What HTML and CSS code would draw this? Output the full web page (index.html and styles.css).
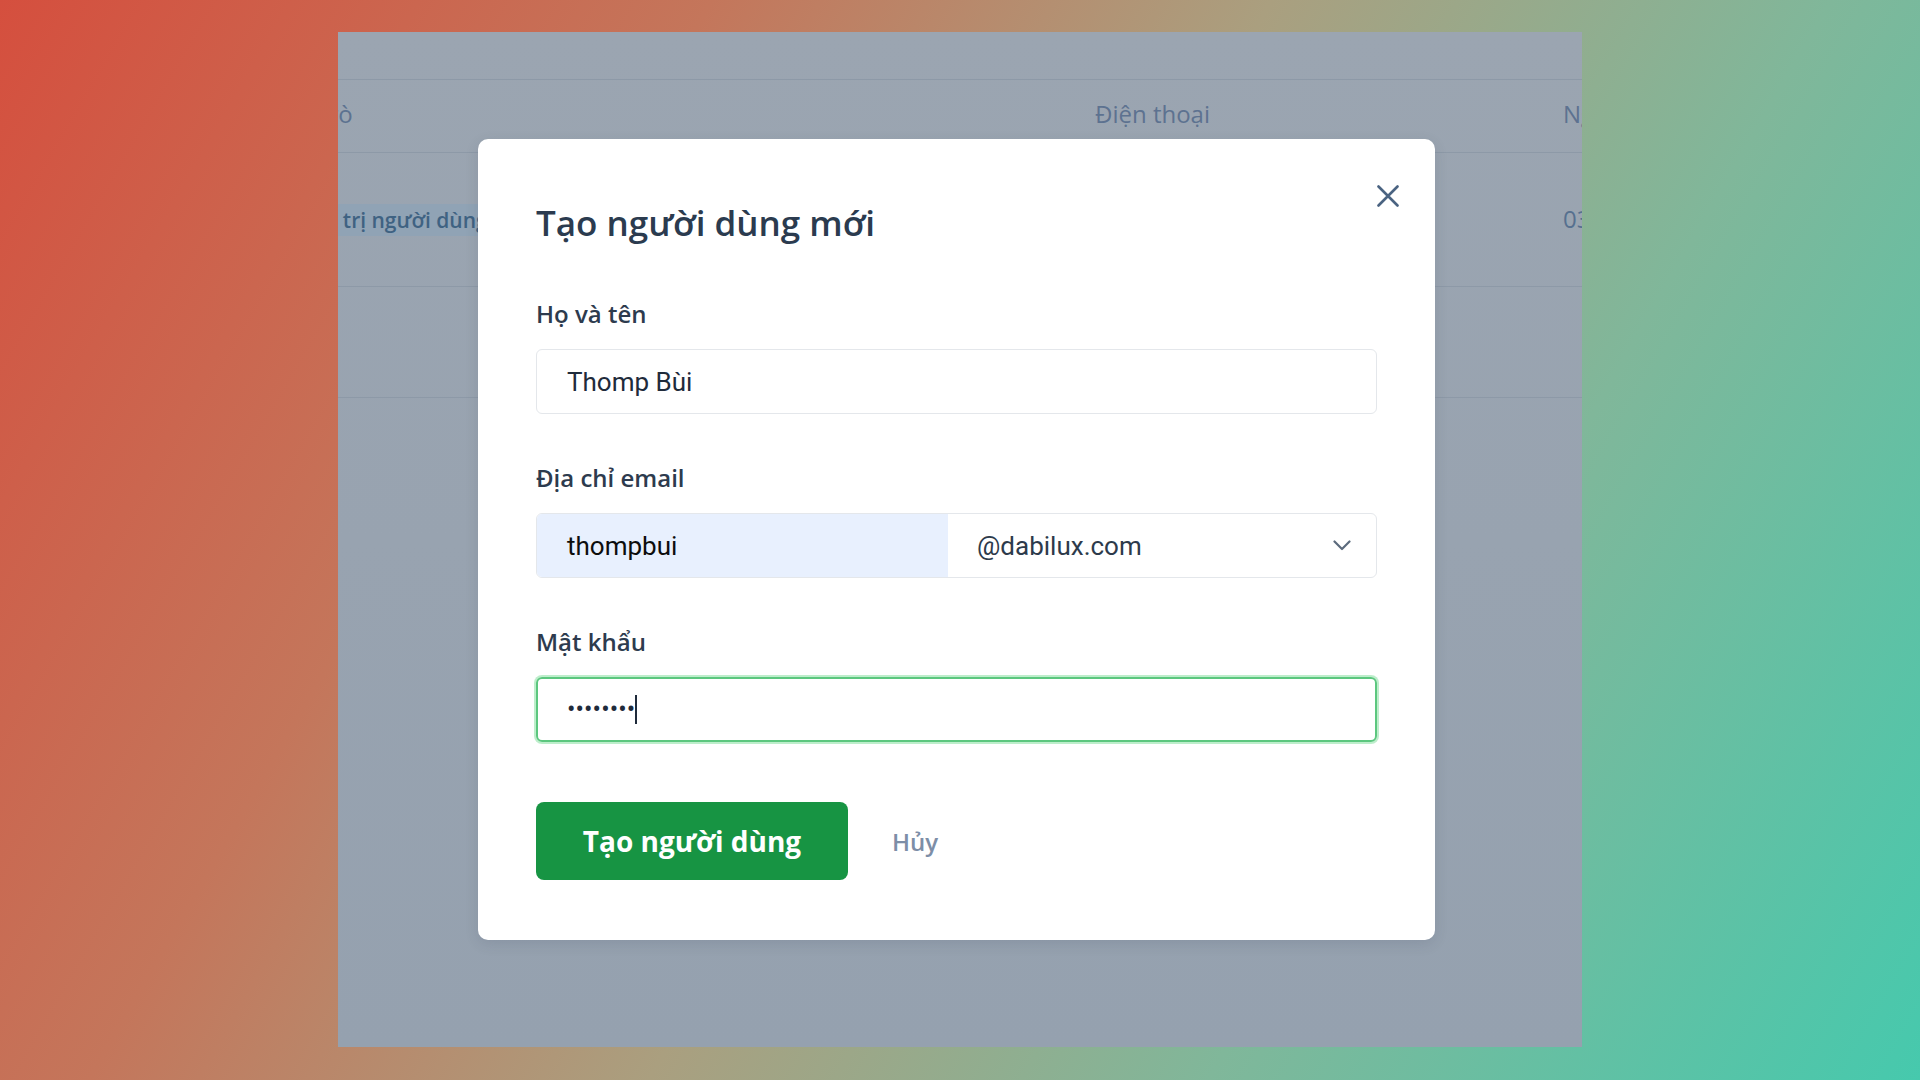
FILE: index.html
```html
<!DOCTYPE html>
<html lang="vi">
<head>
<meta charset="utf-8">
<title>Tạo người dùng mới</title>
<link rel="stylesheet" href="styles.css">
</head>
<body>
<div class="panel">
  <div class="table">
    <div class="toolbar"></div>
    <div class="trow thead">
      <div class="cell c1">Vai trò</div>
      <div class="cell c2">Điện thoại</div>
      <div class="cell c3">Ngày tạo</div>
    </div>
    <div class="trow row1">
      <div class="cell c1"><span class="chip">Quản trị người dùng</span></div>
      <div class="cell c2">0901 234 567</div>
      <div class="cell c3">03/12/2023</div>
    </div>
    <div class="trow row2"></div>
  </div>

  <div class="overlay">
    <div class="modal">
      <h1 class="modal-title">Tạo người dùng mới</h1>
      <button class="close" aria-label="Đóng">
        <svg width="22" height="22" viewBox="0 0 22 22"><path d="M1.5 1.5 L20.5 20.5 M20.5 1.5 L1.5 20.5" stroke="#4a6381" stroke-width="2.6" stroke-linecap="round" fill="none"/></svg>
      </button>

      <div class="field">
        <div class="label">Họ và tên</div>
        <div class="input">Thomp Bùi</div>
      </div>

      <div class="field">
        <div class="label">Địa chỉ email</div>
        <div class="email-group">
          <div class="email-user">thompbui</div>
          <div class="email-domain">
            <span>@dabilux.com</span>
            <svg width="18" height="11" viewBox="0 0 18 11"><path d="M1.5 1.5 L9 9 L16.5 1.5" stroke="#5c6b7d" stroke-width="2.2" stroke-linecap="round" stroke-linejoin="round" fill="none"/></svg>
          </div>
        </div>
      </div>

      <div class="field">
        <div class="label">Mật khẩu</div>
        <div class="input focused"><span class="dots">••••••••</span><span class="caret"></span></div>
      </div>

      <div class="actions">
        <button class="btn-primary">Tạo người dùng</button>
        <button class="btn-cancel">Hủy</button>
      </div>
    </div>
  </div>
</div>
</body>
</html>
```

FILE: styles.css
```css
* { box-sizing: border-box; }

html, body {
  margin: 0;
  width: 1920px;
  height: 1080px;
  overflow: hidden;
}

body {
  padding: 32px 338px 33px 338px;
  background: linear-gradient(120deg, #d54f3e 0%, #c4765b 28%, #aa9f7f 50%, #80b79a 72%, #46c9ad 100%);
  font-family: "Open Sans", "Noto Sans", sans-serif;
}

.panel {
  position: relative;
  height: 100%;
  overflow: hidden;
  background: linear-gradient(180deg, #9ba5b1 0%, #95a1af 100%);
}

/* background table (dimmed app) */
.table {
  margin-left: -66px;
  width: 1600px;
}

.toolbar {
  height: 48px;
  border-bottom: 1px solid #8d99a7;
}

.trow {
  display: grid;
  grid-template-columns: 823px 468px 300px;
  align-items: center;
  border-bottom: 1px solid #8d99a7;
  font-size: 24px;
  color: #5d7290;
}

.thead { height: 73px; padding-bottom: 6px; }
.row1 { height: 134px; padding-bottom: 2px; }
.row2 { height: 111px; }

.cell { white-space: nowrap; }
.thead .c1 { padding-left: 8px; }

.chip {
  display: inline-block;
  padding: 2px 10px 2px;
  background: #90a3b5;
  color: #3f6282;
  font-size: 21px;
  font-weight: 600;
  border-radius: 4px;
}

.row1 .c3 { color: #56708f; }

/* modal */
.overlay {
  position: absolute;
  inset: 0;
  display: flex;
  align-items: center;
  justify-content: flex-start;
  padding-left: 140px;
}

.modal {
  position: relative;
  width: 957px;
  background: #ffffff;
  border-radius: 10px;
  padding: 62px 58px 60px 58px;
  box-shadow: 0 4px 14px rgba(40, 50, 70, 0.12);
}

.modal-title {
  margin: 0;
  font-size: 35px;
  line-height: 44px;
  font-weight: 600;
  color: #2b3b4f;
}

.close {
  position: absolute;
  top: 46px;
  right: 36px;
  width: 22px;
  height: 22px;
  padding: 0;
  border: 0;
  background: none;
  display: flex;
}

.field { margin-top: 48px; }
.modal-title + .close + .field { margin-top: 53px; }

.label {
  font-size: 24px;
  line-height: 32px;
  font-weight: 600;
  color: #2d3b4e;
  margin-bottom: 19px;
}

.input {
  height: 65px;
  border: 1px solid #e4e7eb;
  border-radius: 6px;
  padding: 0 30px;
  display: flex;
  align-items: center;
  font-family: Roboto, "Noto Sans", sans-serif;
  font-size: 26px;
  color: #1f2b3b;
}

.input.focused {
  border: 2px solid #5cc77f;
  box-shadow: 0 0 0 2px rgba(134, 224, 160, 0.55);
  padding-left: 29px;
}

.dots {
  font-size: 25px;
  letter-spacing: 0.1px;
  color: #1f2b3b;
}

.caret {
  width: 2px;
  height: 29px;
  margin-left: 0;
  background: #1f2b3b;
}

.email-group {
  height: 65px;
  display: flex;
  border: 1px solid #e4e7eb;
  border-radius: 6px;
  font-family: Roboto, "Noto Sans", sans-serif;
  font-size: 26px;
}

.email-user {
  width: 411px;
  background: #e8f0fe;
  border-radius: 5px 0 0 5px;
  padding-left: 30px;
  display: flex;
  align-items: center;
  color: #0d0d0d;
}

.email-domain {
  flex: 1;
  display: flex;
  align-items: center;
  justify-content: space-between;
  padding: 0 25px 0 29px;
  color: #2d3a4b;
}

.actions {
  margin-top: 60px;
  display: flex;
  align-items: center;
}

.btn-primary {
  width: 312px;
  height: 78px;
  border: 0;
  border-radius: 8px;
  background: #179443;
  color: #ffffff;
  font-family: "Open Sans", "Noto Sans", sans-serif;
  font-size: 28px;
  font-weight: 700;
  padding: 0;
}

.btn-cancel {
  margin-left: 44px;
  border: 0;
  background: none;
  padding: 0;
  font-family: "Open Sans", "Noto Sans", sans-serif;
  font-size: 24px;
  font-weight: 600;
  color: #7d8ea7;
}
```
